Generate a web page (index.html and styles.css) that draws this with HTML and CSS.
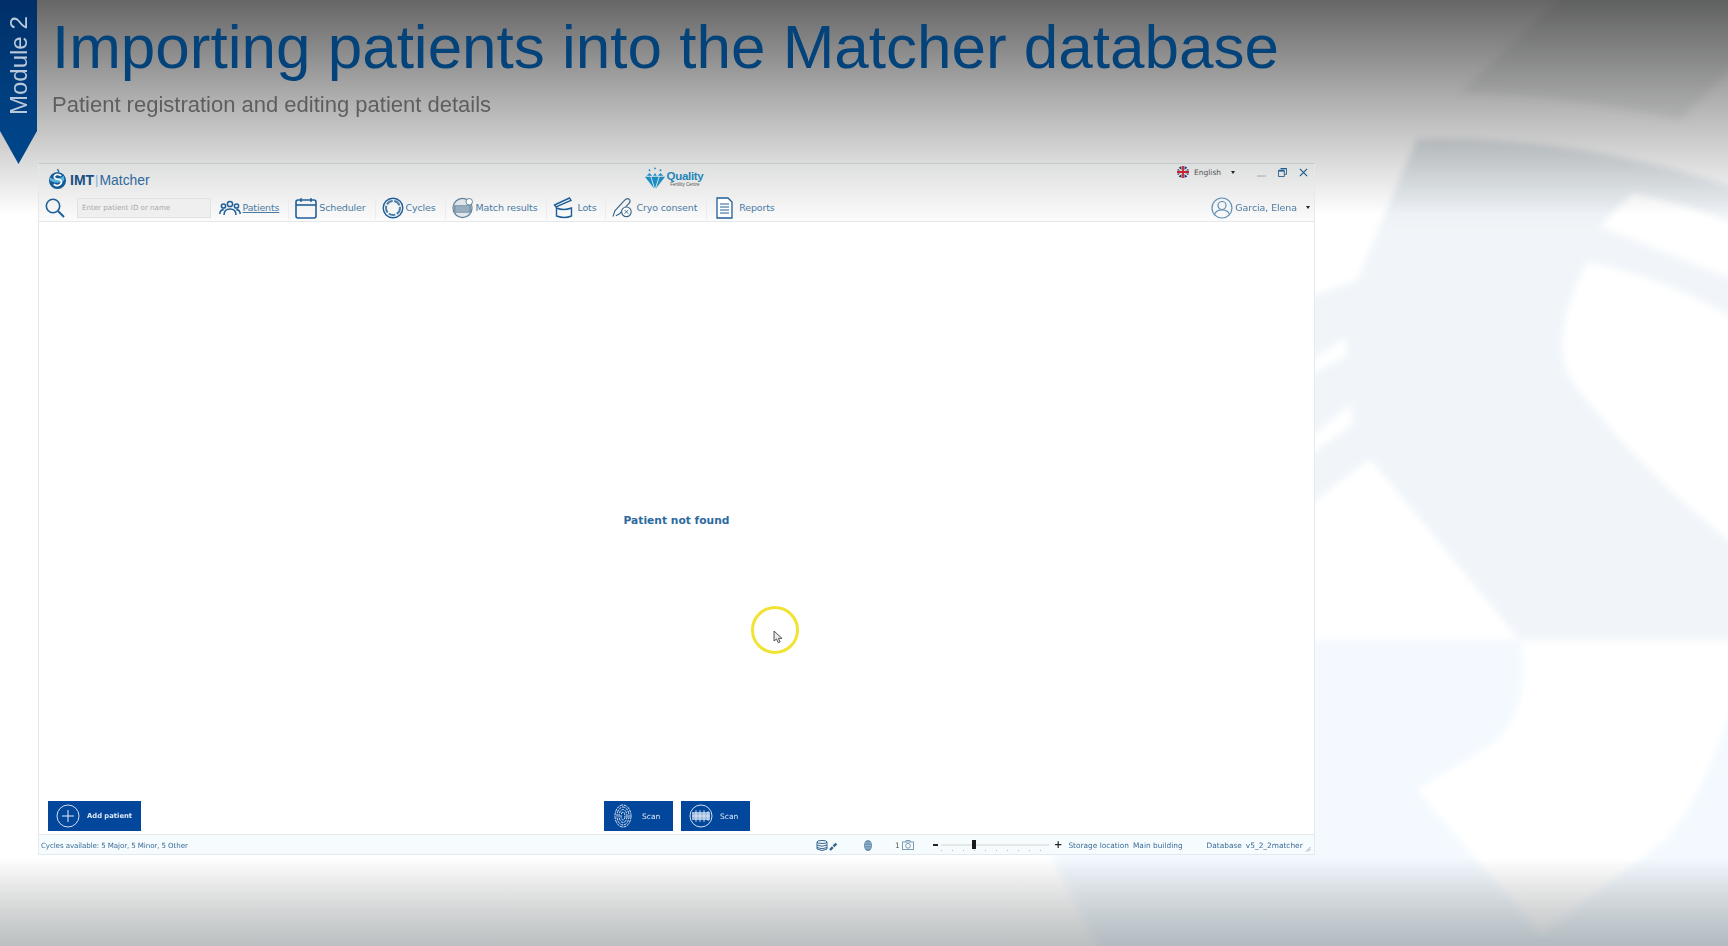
FILE: index.html
```html
<!DOCTYPE html>
<html lang="en">
<head>
<meta charset="utf-8">
<title>Importing patients into the Matcher database</title>
<link rel="stylesheet" href="styles.css">
</head>
<body>
<svg class="backdrop" viewBox="0 0 1728 946" preserveAspectRatio="none" aria-hidden="true">
  <defs>
    <linearGradient id="topShade" x1="0" y1="0" x2="0" y2="1">
      <stop offset="0" stop-color="#000" stop-opacity=".6"/>
      <stop offset=".45" stop-color="#000" stop-opacity=".32"/>
      <stop offset=".72" stop-color="#000" stop-opacity=".16"/>
      <stop offset="1" stop-color="#000" stop-opacity="0"/>
    </linearGradient>
    <linearGradient id="bottomShade" x1="0" y1="0" x2="0" y2="1">
      <stop offset="0" stop-color="#000" stop-opacity="0"/>
      <stop offset="1" stop-color="#1a2a30" stop-opacity=".3"/>
    </linearGradient>
    <linearGradient id="discFill" gradientUnits="userSpaceOnUse" x1="0" y1="139" x2="0" y2="232">
      <stop offset="0" stop-color="#dfe5e9"/>
      <stop offset="1" stop-color="#f1f5f9"/>
    </linearGradient>
    <filter id="soft" x="-5%" y="-5%" width="110%" height="110%"><feGaussianBlur stdDeviation="3.5"/></filter>
  </defs>
  <rect width="1728" height="946" fill="#fff"/>
  <g filter="url(#soft)">
    <path d="M1040 640H1740V960H1105L1053 860Z" fill="#f3f9fe"/>
    <path d="M1300 300L1357 280L1417 139Q1580 135 1740 190V700L1680 650L1520 640L1370 459L1300 512Z" fill="url(#discFill)"/>
    <path d="M1300 368L1345 338L1348 355L1300 380Z M1300 446L1350 404L1353 424L1300 462Z" fill="#fff"/>
    <path d="M1587 262Q1660 275 1740 322V550Q1640 470 1575 385Q1545 345 1587 262Z" fill="#fff"/>
    <path d="M1633 193Q1690 205 1740 226V282L1600 226Z" fill="#fff"/>
    <path d="M1460 93L1570 -10H1740V60L1680 120Q1570 95 1460 93Z" fill="#5f6b6e" opacity=".1"/>
    <path d="M1520 640H1740V690L1715 754Q1695 805 1665 840L1541 935L1417 790L1490 745Q1525 722 1523 660Z" fill="#fff"/>
  </g>
  <rect width="1728" height="215" fill="url(#topShade)"/>
  <rect y="858" width="1728" height="88" fill="url(#bottomShade)"/>
</svg>

<header class="slide-head">
  <div class="ribbon"><span class="ribbon-text">Module 2</span></div>
  <div class="titles">
    <h1 class="title">Importing patients into the Matcher database</h1>
    <p class="subtitle">Patient registration and editing patient details</p>
  </div>
</header>

<section class="app">
  <div class="topbar">
    <div class="brand">
      <svg class="brand-mark" viewBox="0 0 20 22"><path d="M10 0l1.500 3" stroke="#1f6fa8" stroke-width="1.500"/><circle cx="10" cy="12" r="9" fill="#135a96"/><path d="M2 9q7 4 15-2v5q-7 5-15 0z" fill="#5cb4dc"/><path d="M14 7q-5-3-7 0t5 4q4 2 1 5t-7 0" fill="none" stroke="#fff" stroke-width="1.800"/></svg>
      <span class="brand-imt">IMT</span><span class="brand-bar">|</span><span class="brand-name">Matcher</span>
    </div>
    <div class="quality">
      <svg class="quality-mark" viewBox="0 0 24 26"><g fill="#1b8cc4"><path d="M3 10l3-3 3 3zM10 10l2-3 2 3zM15 10l3-3 3 3zM1 11h6l4 13zM8 11h8l-4 13zM17 11h6l-10 13z"/><circle cx="12" cy="2" r="1"/><circle cx="6" cy="4" r="1"/><circle cx="18" cy="4" r="1"/></g></svg>
      <div class="quality-text"><span class="quality-name">Quality</span><span class="quality-sub">Fertility Centre</span></div>
    </div>
    <div class="winbar">
      <svg class="flag" viewBox="0 0 12 12"><circle cx="6" cy="6" r="6" fill="#2b3a68"/><path d="M1 2l10 8M11 2L1 10" stroke="#e8e8e8" stroke-width="1.400"/><path d="M6 0v12M0 6h12" stroke="#e8e8e8" stroke-width="3"/><path d="M6 0v12M0 6h12" stroke="#c8202f" stroke-width="1.800"/></svg>
      <span class="lang">English</span>
      <span class="caret"></span>
      <span class="win-min"></span>
      <svg class="win-icon" viewBox="0 0 10 10"><path d="M3 .5h6.500V7H7M.5 3H7v6.500H.5z" fill="none" stroke="#1f5c8c" stroke-width="1"/><path d="M.5 3H7M3 .5h6.500" stroke="#1f5c8c" stroke-width="2"/></svg>
      <svg class="win-icon" viewBox="0 0 10 10"><path d="M1 1l8 8M9 1L1 9" stroke="#1f5c8c" stroke-width="1.300"/></svg>
    </div>
  </div>

  <nav class="toolbar">
    <svg class="search-icon" viewBox="0 0 20 20"><circle cx="8" cy="8" r="6.700" fill="none" stroke="#1f5f99" stroke-width="1.600"/><path d="M13 13l6 6" stroke="#1f5f99" stroke-width="2"/></svg>
    <div class="search-box">Enter patient ID or name</div>

    <a class="tool tool-first">
      <svg class="tool-icon tool-icon-patients" viewBox="0 0 22 16"><g fill="none" stroke="#1f5f99" stroke-width="1.500"><circle cx="11" cy="4" r="2.600"/><circle cx="4.500" cy="6" r="2.100"/><circle cx="17.500" cy="6" r="2.100"/><path d="M5 15q0-6 6-6t6 6M.8 14q0-4 4-4.500M21.200 14q0-4-4-4.500"/></g></svg>
      <span class="tool-label tool-label-active">Patients</span>
    </a>
    <a class="tool">
      <svg class="tool-icon" viewBox="0 0 22 22"><rect x="1" y="3" width="20" height="18" rx="2" fill="none" stroke="#1f5f99" stroke-width="1.600"/><path d="M1 8h20" stroke="#1f5f99" stroke-width="1.600"/><path d="M6 1v4M16 1v4" stroke="#1f5f99" stroke-width="1.400"/></svg>
      <span class="tool-label">Scheduler</span>
    </a>
    <a class="tool">
      <svg class="tool-icon" viewBox="0 0 22 22"><circle cx="11" cy="11" r="9.800" fill="none" stroke="#1f5f99" stroke-width="1.400"/><circle cx="11" cy="11" r="7" fill="none" stroke="#4f7fa6" stroke-width="2" stroke-dasharray="7 1.500"/></svg>
      <span class="tool-label">Cycles</span>
    </a>
    <a class="tool">
      <svg class="tool-icon" viewBox="0 0 23 22"><circle cx="11" cy="11" r="10" fill="#dfe6ec" stroke="#5d7f99" stroke-width="1.200"/><rect x="2" y="8" width="18" height="8" fill="#7f98ac"/><path d="M4 10h14M4 12h14M4 14h14" stroke="#c5d3de" stroke-width=".7"/><circle cx="18" cy="4.500" r="3.400" fill="#fff" stroke="#5d7f99"/></svg>
      <span class="tool-label">Match results</span>
    </a>
    <a class="tool">
      <svg class="tool-icon" viewBox="0 0 21 22"><path d="M1 8L16 1l1.500 2.500L2.500 10z" fill="none" stroke="#1f5f99" stroke-width="1.400"/><path d="M3 11q7 3 15 0v8q-7 3-15 0z" fill="none" stroke="#1f5f99" stroke-width="1.400"/></svg>
      <span class="tool-label">Lots</span>
    </a>
    <a class="tool">
      <svg class="tool-icon tool-icon-cryo" viewBox="0 0 25 22"><path d="M1 20l2-6L13 3q3-3 5-1t-1 5L8 17l-4 2" fill="none" stroke="#3d6686" stroke-width="1.200"/><circle cx="15" cy="15" r="5" fill="#fff" stroke="#3d6686" stroke-width="1.200"/><path d="M13 13l4 4M17 13l-4 4" stroke="#3d6686"/></svg>
      <span class="tool-label tool-label-tight">Cryo consent</span>
    </a>
    <a class="tool">
      <svg class="tool-icon tool-icon-report" viewBox="0 0 17 22"><path d="M1 1h11l4 4v16H1z" fill="#fff" stroke="#1f5f99" stroke-width="1.300"/><path d="M4 7h9M4 10h9M4 13h9M4 16h9" stroke="#1f5f99"/></svg>
      <span class="tool-label">Reports</span>
    </a>

    <div class="user">
      <svg class="user-icon" viewBox="0 0 22 22"><circle cx="11" cy="11" r="10" fill="none" stroke="#5f8fb5" stroke-width="1.200"/><circle cx="11" cy="8.500" r="4" fill="none" stroke="#5f8fb5" stroke-width="1.200"/><path d="M3.500 18q1-5 7.500-5t7.500 5" fill="none" stroke="#5f8fb5" stroke-width="1.200"/></svg>
      <span class="user-name">Garcia, Elena</span>
      <span class="caret"></span>
    </div>
  </nav>

  <main class="app-body">
    <p class="empty-msg">Patient not found</p>
    <span class="pointer">
      <svg class="pointer-arrow" viewBox="0 0 10 14"><path d="M1 1v10l2.500-2 1.800 3.800 1.800-.9-1.700-3.500H9z" fill="#e8e8e8" stroke="#555" stroke-width="1"/></svg>
    </span>
  </main>

  <div class="actions">
    <div class="actions-left">
      <button class="btn btn-add">
        <svg class="btn-icon-lg" viewBox="0 0 24 24"><circle cx="12" cy="12" r="11" fill="none" stroke="#cfe0f2" stroke-width="1"/><path d="M12 6v12M6 12h12" stroke="#e3eef8" stroke-width="1"/></svg>
        <span>Add patient</span>
      </button>
    </div>
    <div class="actions-center">
      <button class="btn btn-scan">
        <svg class="btn-icon-finger" viewBox="0 0 18 24"><g fill="none" stroke="#dce8f4" stroke-width="1" stroke-dasharray="3 .8"><ellipse cx="9" cy="12" rx="8" ry="11"/><ellipse cx="9" cy="12" rx="6" ry="9"/><ellipse cx="9" cy="12" rx="4" ry="6.500"/><ellipse cx="9" cy="12" rx="2" ry="4"/></g></svg>
        <span>Scan</span>
      </button>
      <button class="btn btn-scan">
        <svg class="btn-icon-lg" viewBox="0 0 24 24"><circle cx="12" cy="12" r="11" fill="none" stroke="#cfe0f2" stroke-width="1"/><rect x="3" y="8" width="18" height="8" fill="#9dbbdc"/><path d="M7 6v12M11 6v12M15 6v12M19 7v10M3 12h18" stroke="#e3eef8" stroke-width=".8"/></svg>
        <span>Scan</span>
      </button>
    </div>
    <div></div>
  </div>

  <footer class="statusbar">
    <span class="status-left">Cycles available: 5 Major, 5 Minor, 5 Other</span>
    <svg class="st-db" viewBox="0 0 22 11"><g fill="none" stroke="#33658f"><ellipse cx="6" cy="2" rx="5" ry="1.500"/><path d="M1 2v7q5 3 10 0V2M1 5q5 2.500 10 0M1 7.500q5 2.500 10 0"/></g><path d="M14 10l7-7" stroke="#33658f" stroke-width="2.400" stroke-dasharray="4 1"/></svg>
    <svg class="st-finger" viewBox="0 0 8 11"><ellipse cx="4" cy="5.500" rx="4" ry="5.500" fill="#6a8fb0"/><path d="M1 3h6M1 5.500h6M1 8h6" stroke="#c2d3e2" stroke-width=".6"/></svg>
    <span class="st-count">1</span>
    <svg class="st-cam" viewBox="0 0 12 10"><rect x=".5" y="2" width="11" height="7.500" fill="none" stroke="#7f9cb5"/><circle cx="6" cy="5.800" r="2.400" fill="none" stroke="#7f9cb5"/><path d="M3 2l1-1.500h4L9 2" fill="none" stroke="#7f9cb5"/></svg>
    <div class="zoom">
      <span class="zoom-minus"></span>
      <span class="zoom-track"><span class="zoom-thumb"></span></span>
      <span class="zoom-plus">+</span>
    </div>
    <span class="st-text st-storage">Storage location</span>
    <span class="st-text st-building">Main building</span>
    <span class="st-text st-database">Database</span>
    <span class="st-text st-version">v5_2_2matcher</span>
    <svg class="st-grip" viewBox="0 0 6 6"><path d="M5.500 1L1 5.500M5.500 3L3 5.500" stroke="#8aa0b2" stroke-width=".8"/></svg>
  </footer>
</section>
</body>
</html>
```

FILE: styles.css
```css
* { box-sizing: border-box; }
html, body { margin: 0; height: 100%; }
body {
  width: 1728px;
  height: 946px;
  overflow: hidden;
  position: relative;
  font-family: "Liberation Sans", Arial, sans-serif;
  background: #fff;
}
.backdrop {
  position: absolute;
  inset: 0;
  width: 1728px;
  height: 946px;
  z-index: 0;
}

/* slide heading */
.slide-head {
  position: relative;
  z-index: 1;
  display: flex;
  height: 163px;
  filter: blur(.4px);
}
.ribbon {
  width: 37px;
  height: 164px;
  flex: none;
  background: linear-gradient(#002f68, #003f80 60%, #00468c);
  clip-path: polygon(0 0, 100% 0, 100% 131px, 50% 100%, 0 131px);
  display: flex;
  justify-content: center;
}
.ribbon-text {
  writing-mode: vertical-rl;
  transform: rotate(180deg);
  color: #b9c9d9;
  font-size: 24px;
  line-height: 37px;
  height: 98px;
  margin-top: 17px;
  white-space: nowrap;
  text-align: left;
}
.titles {
  margin-left: 15px;
  display: flex;
  flex-direction: column;
}
.title {
  margin: 14px 0 0;
  font-size: 62px;
  font-weight: 400;
  line-height: 66px;
  color: #04427a;
  white-space: nowrap;
}
.subtitle {
  margin: 12px 0 0;
  font-size: 22px;
  line-height: 26px;
  color: #5e5e5e;
  white-space: nowrap;
}

/* application window */
.app {
  position: relative;
  z-index: 1;
  margin-left: 38px;
  width: 1277px;
  height: 692px;
  border: 1px solid #e2eaf0;
  border-top-color: #c4c9cc;
  display: flex;
  flex-direction: column;
  font-family: "DejaVu Sans", sans-serif;
  color: #2b628f;
  filter: blur(.55px);
}
.topbar {
  height: 31px;
  flex: none;
  display: grid;
  grid-template-columns: 1fr auto 1fr;
  align-items: start;
  background: linear-gradient(#dedfdf, #eeeeee);
}
.brand {
  display: flex;
  align-items: center;
  padding: 5px 0 0 9px;
  color: #2b628f;
}
.brand-mark { width: 19px; height: 21px; margin-right: 3px; }
.brand-imt { font: 700 14px "Liberation Sans", sans-serif; color: #1b4f82; }
.brand-bar { font: 400 13px "Liberation Sans", sans-serif; color: #7fb2d6; margin: 0 1px; }
.brand-name { font: 400 13.900px "Liberation Sans", sans-serif; color: #2f6a9c; }
.quality { display: flex; align-items: flex-start; padding-top: 2px; margin-right: 6px; }
.quality-mark { width: 22px; height: 25px; }
.quality-text { display: flex; flex-direction: column; margin-left: 1px; padding-top: 4px; }
.quality-name { font: 700 11.500px/12px "Liberation Sans", sans-serif; letter-spacing: -.3px; color: #2686b8; }
.quality-sub { font: 400 4.500px/6px "Liberation Sans", sans-serif; color: #555; text-align: center; }
.winbar {
  display: flex;
  align-items: center;
  justify-content: flex-end;
  padding: 1px 6px 0 0;
  height: 15px;
}
.flag { width: 12px; height: 12px; margin-right: 5px; }
.lang { font-size: 7.500px; color: #555; width: 37px; }
.caret {
  width: 0;
  height: 0;
  border: 2.500px solid transparent;
  border-top: 3px solid #222;
  border-bottom: 0;
}
.win-min { width: 9px; height: 2px; background: #c4c8cc; margin: 7px 12px 0 22px; }
.win-icon { width: 9px; height: 9px; margin-left: 12px; }
.win-min + .win-icon { margin-left: 0; }

.toolbar {
  height: 27px;
  flex: none;
  display: flex;
  align-items: center;
  padding: 0 0 1px 6px;
  background: linear-gradient(#eeeeee, #fbfbfb);
  border-bottom: 1px solid #e4e8ea;
}
.search-icon { width: 20px; height: 20px; flex: none; }
.search-box {
  width: 134px;
  height: 20px;
  margin-left: 12px;
  padding-left: 4px;
  background: #efefef;
  border: 1px solid #e2e2e2;
  font-size: 7.100px;
  line-height: 18px;
  color: #a8a8a8;
  white-space: nowrap;
}
.tool {
  display: flex;
  align-items: center;
  height: 22px;
  padding: 0 9px 0 6px;
  border-left: 1px solid #ececec;
}
.tool-first { border-left: 0; margin-left: 1.500px; padding-right: 9px; }
.tool-icon { width: 22px; height: 22px; flex: none; }
.tool-icon-patients { height: 16px; }
.tool-icon-cryo { width: 24px; }
.tool-icon-report { width: 17px; margin: 0 4px 0 3px; }
.tool-label {
  margin-left: 2px;
  font-size: 9.500px;
  letter-spacing: -.15px;
  color: #4a7aa3;
  white-space: nowrap;
}
.tool-label-tight { margin-left: 0; }
.tool-label-active { text-decoration: underline; }
.user {
  margin-left: auto;
  display: flex;
  align-items: center;
  padding-right: 4px;
}
.user-icon { width: 22px; height: 22px; }
.user-name { margin: 0 9px 0 2px; font-size: 9.500px; letter-spacing: -.1px; color: #4a7aa3; white-space: nowrap; }

.app-body {
  position: relative;
  flex: 1;
  background: #fff;
  display: flex;
  align-items: center;
  justify-content: center;
}
.empty-msg {
  margin: 17px 0 0;
  font-size: 10.700px;
  font-weight: 700;
  color: #2c6a9f;
}
.pointer {
  position: absolute;
  left: 712px;
  top: 384px;
  width: 48px;
  height: 48px;
  border: 3px solid #f1e334;
  border-radius: 50%;
}
.pointer-arrow {
  position: absolute;
  left: 19px;
  top: 21px;
  width: 10px;
  height: 14px;
}

.actions {
  display: grid;
  grid-template-columns: 1fr auto 1fr;
  padding: 0 8px 3px 9px;
  background: #fff;
  flex: none;
}
.actions-left { display: flex; }
.actions-center { display: flex; gap: 8px; }
.btn {
  height: 30px;
  border: 0;
  padding: 0;
  display: flex;
  align-items: center;
  background: #03479c;
  color: #dfe9f4;
  font-family: "DejaVu Sans", sans-serif;
  font-size: 7.500px;
}
.btn-add { width: 93px; padding-left: 8px; gap: 7px; font-size: 6.800px; font-weight: 700; }
.btn-scan { width: 69px; padding-left: 10px; }
.btn-scan + .btn-scan { padding-left: 8px; }
.btn-icon-lg { width: 24px; height: 24px; margin-right: 7px; flex: none; }
.btn-icon-finger { width: 18px; height: 24px; margin-right: 10px; flex: none; }
.btn-add .btn-icon-lg { margin-right: 0; }

.statusbar {
  height: 20px;
  flex: none;
  display: flex;
  align-items: center;
  padding: 1px 3px 0 2px;
  background: #f6fbfe;
  border-top: 1px solid #e6eaec;
  font-size: 7.400px;
  color: #3a6d98;
}
.status-left { white-space: nowrap; letter-spacing: -.1px; font-size: 7.100px; width: 775px; flex: none; }
.st-db { width: 22px; height: 11px; flex: none; }
.st-finger { width: 8px; height: 11px; margin-left: 26px; flex: none; }
.st-count { margin-left: 23px; width: 7px; color: #555; flex: none; }
.st-cam { width: 12px; height: 10px; flex: none; }
.zoom { display: flex; align-items: center; margin-left: 19px; flex: none; }
.zoom-minus { width: 5px; height: 2px; background: #222; }
.zoom-track {
  position: relative;
  width: 108px;
  height: 2px;
  margin: 0 5px 0 3px;
  background: #e6e6e6;
}
.zoom-track::after {
  content: "";
  position: absolute;
  left: 0;
  right: 0;
  top: 6px;
  height: 1px;
  background: repeating-linear-gradient(90deg, #b8b8b8 0 1px, transparent 1px 11px);
}
.zoom-thumb {
  position: absolute;
  left: 31px;
  top: -4px;
  width: 4px;
  height: 9px;
  background: #1a1a1a;
}
.zoom-plus { font-size: 10px; font-weight: 700; color: #222; line-height: 10px; }
.st-text { white-space: nowrap; }
.st-storage { margin-left: 6px; }
.st-building { margin-left: 4px; }
.st-database { margin-left: 24px; }
.st-version { margin-left: 4px; }
.st-grip { width: 6px; height: 6px; margin-left: auto; align-self: flex-end; margin-bottom: 2px; }
```
